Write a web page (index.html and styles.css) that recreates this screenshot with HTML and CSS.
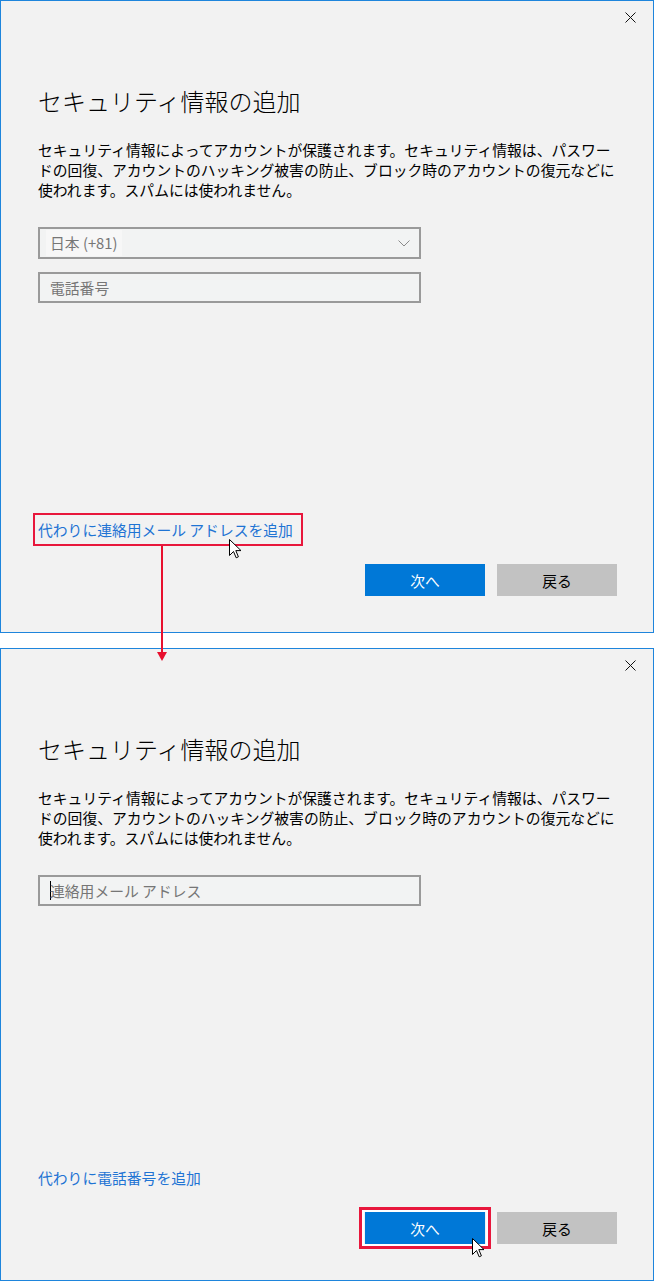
FILE: index.html
```html
<!DOCTYPE html>
<html lang="ja">
<head>
<meta charset="utf-8">
<title>セキュリティ情報の追加</title>
<link rel="stylesheet" href="styles.css">
</head>
<body>
<div class="page">
  <section class="panel">
    <div class="titlebar">
      <span class="close"><svg width="11" height="11" viewBox="0 0 11 11"><path d="M0.5 0.5 L10.5 10.5 M10.5 0.5 L0.5 10.5" stroke="#111" stroke-width="1" fill="none"/></svg></span>
    </div>
    <h1 class="title">セキュリティ情報の追加</h1>
    <p class="desc">セキュリティ情報によってアカウントが保護されます。セキュリティ情報は、パスワー<br>ドの回復、アカウントのハッキング被害の防止、ブロック時のアカウントの復元などに<br>使われます。スパムには使われません。</p>
    <div class="field select">
      <span class="value">日本 (+81)</span>
      <svg class="chevron" width="12" height="7" viewBox="0 0 12 7"><path d="M0.5 0.5 L6 6 L11.5 0.5" stroke="#8a8a8a" stroke-width="1" fill="none"/></svg>
    </div>
    <div class="field input"><span class="placeholder">電話番号</span></div>
    <div class="spacer"></div>
    <div class="link-row"><a class="link marked">代わりに連絡用メール アドレスを追加</a></div>
    <div class="actions">
      <button class="btn primary">次へ</button>
      <button class="btn secondary">戻る</button>
    </div>
  </section>

  <section class="panel">
    <div class="titlebar">
      <span class="close"><svg width="11" height="11" viewBox="0 0 11 11"><path d="M0.5 0.5 L10.5 10.5 M10.5 0.5 L0.5 10.5" stroke="#111" stroke-width="1" fill="none"/></svg></span>
    </div>
    <h1 class="title">セキュリティ情報の追加</h1>
    <p class="desc">セキュリティ情報によってアカウントが保護されます。セキュリティ情報は、パスワー<br>ドの回復、アカウントのハッキング被害の防止、ブロック時のアカウントの復元などに<br>使われます。スパムには使われません。</p>
    <div class="field input first"><span class="caret"></span><span class="placeholder">連絡用メール アドレス</span></div>
    <div class="spacer"></div>
    <div class="link-row"><a class="link">代わりに電話番号を追加</a></div>
    <div class="actions">
      <span class="marked-btn"><button class="btn primary">次へ</button></span>
      <button class="btn secondary">戻る</button>
    </div>
  </section>

  <svg class="arrow" width="14" height="116" viewBox="0 0 14 116"><rect x="6" y="0" width="2" height="108" fill="#e8102e"/><path d="M2 106 L12 106 L7 115 Z" fill="#e8102e"/></svg>
  <svg class="cursor c1" width="13" height="20" viewBox="0 0 13 20"><path d="M0.5 0.5 L0.5 16.5 L4.5 12.5 L7.2 18.8 L9.4 17.8 L6.8 11.6 L12 11.6 Z" fill="#fff" stroke="#000" stroke-width="1" stroke-linejoin="miter"/></svg>
  <svg class="cursor c2" width="13" height="20" viewBox="0 0 13 20"><path d="M0.5 0.5 L0.5 16.5 L4.5 12.5 L7.2 18.8 L9.4 17.8 L6.8 11.6 L12 11.6 Z" fill="#fff" stroke="#000" stroke-width="1" stroke-linejoin="miter"/></svg>
</div>
</body>
</html>
```

FILE: styles.css
```css
body {
  margin: 0;
  background: #ffffff;
  font-family: "Noto Sans CJK JP", "Noto Sans", sans-serif;
}

.page {
  position: relative;
  width: 654px;
}

.panel {
  box-sizing: border-box;
  height: 633px;
  border: 1px solid #1e85dc;
  background: #f2f2f2;
  display: flex;
  flex-direction: column;
  padding: 0 37px 36px 37px;
}

.panel + .panel {
  margin-top: 15px;
}

.titlebar {
  height: 32px;
  display: flex;
  justify-content: flex-end;
  margin-right: -37px;
}

.close {
  width: 46px;
  height: 32px;
  display: flex;
  align-items: center;
  justify-content: center;
}

.title {
  margin: 52px 0 0 0;
  font-size: 24px;
  line-height: 32px;
  font-weight: 300;
  color: #000;
}

.desc {
  margin: 23px 0 0 0;
  font-size: 14.8px;
  line-height: 20px;
  white-space: nowrap;
  color: #000;
}

.field {
  box-sizing: border-box;
  width: 383px;
  height: 32px;
  border: 2px solid #9a9a9a;
  display: flex;
  align-items: center;
  padding: 0 9px 0 10px;
  color: #767676;
  font-size: 14.8px;
  background: #f2f3f3;
}

.field.select {
  margin-top: 27px;
  justify-content: space-between;
}

.field.select .value {
  background: #f7f7f7;
  padding: 0 4px;
  margin-left: -4px;
  line-height: 26px;
}

.field.input {
  margin-top: 13px;
  height: 31px;
}

.field.input.first {
  margin-top: 27px;
}

.caret {
  display: inline-block;
  width: 1px;
  height: 19px;
  background: #000;
  margin-right: -1px;
}

.spacer {
  flex: 1;
}

.link-row {
  font-size: 14.8px;
  line-height: 20px;
}

.link {
  color: #1f74d4;
  text-decoration: none;
  position: relative;
}

.link.marked::after {
  content: "";
  position: absolute;
  left: -5px;
  right: -10px;
  top: -6px;
  bottom: -6px;
  border: 2px solid #e8173c;
}

.actions {
  margin-top: 24px;
  margin-right: -1px;
  display: flex;
  justify-content: flex-end;
  gap: 12px;
}

.btn {
  width: 120px;
  height: 32px;
  border: 0;
  padding: 0;
  font-family: "Noto Sans CJK JP", "Noto Sans", sans-serif;
  font-size: 14.8px;
}

.primary {
  background: #0078d7;
  color: #fff;
}

.secondary {
  background: #c2c2c2;
  color: #000;
}

.marked-btn {
  position: relative;
  display: flex;
}

.marked-btn::after {
  content: "";
  position: absolute;
  left: -6px;
  right: -6px;
  top: -5px;
  bottom: -5px;
  border: 3px solid #e8173c;
  box-shadow: inset 0 0 0 2px #ffffff;
}

.arrow {
  position: absolute;
  left: 155px;
  top: 546px;
}

.cursor {
  position: absolute;
}

.c1 {
  left: 229px;
  top: 539px;
}

.c2 {
  left: 472px;
  top: 1238px;
}
```
